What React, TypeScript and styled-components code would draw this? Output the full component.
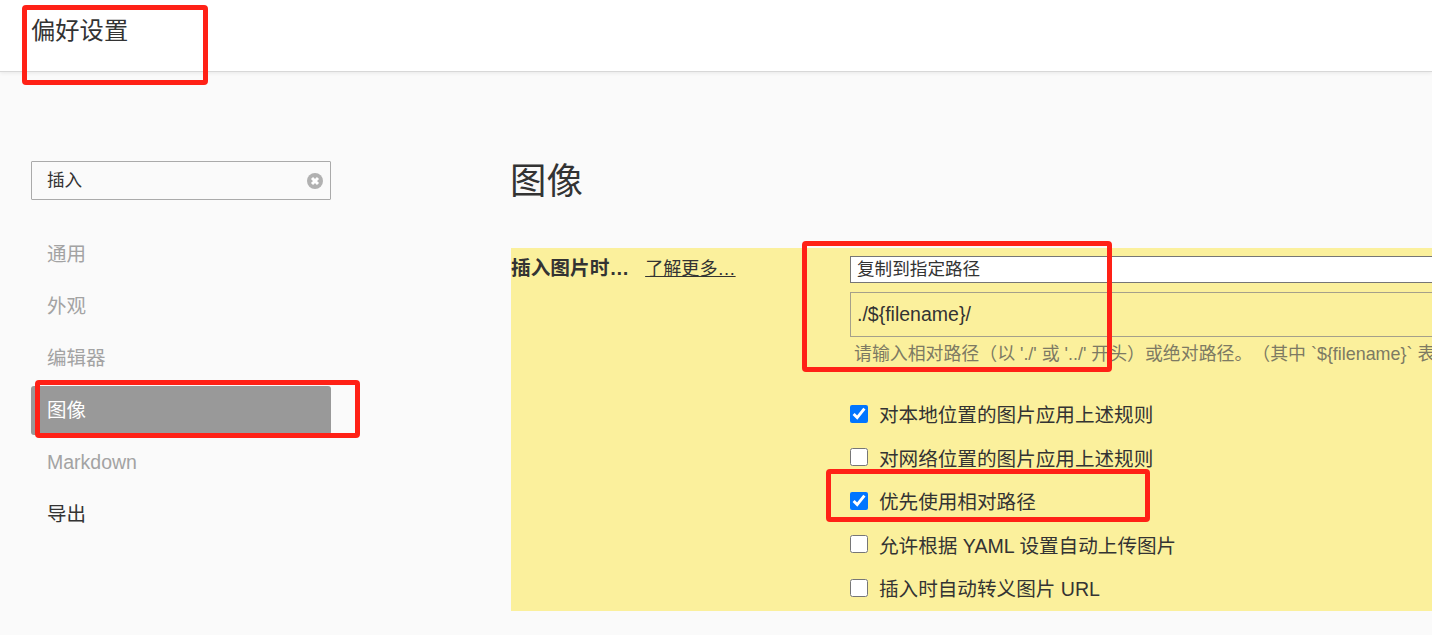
import React from "react";
import styled, { createGlobalStyle } from "styled-components";

const GlobalStyle = createGlobalStyle`
    html, body {
        margin: 0;
        padding: 0;
        height: 100%;
        background-color: #fafafa;
        color: #333;
        font-family: "Liberation Sans", "Noto Sans CJK SC", sans-serif;
    }
`;

const Page = styled.div`
    position: relative;
    width: 100%;
    height: 635px;
    overflow: hidden;
`;

const TitleBar = styled.header`
    height: 72px;
    box-sizing: border-box;
    padding: 15px 0 0 31px;
    background-color: #fff;
    border-bottom: 1px solid #d8d8d8;
    box-shadow: 0 1px 4px rgba(0, 0, 0, 0.08);
    font-size: 24.3px;
    line-height: 32px;
`;

const Content = styled.div`
    display: flex;
`;

const Sidebar = styled.aside`
    flex: 0 0 300px;
    margin: 89px 180px 0 31px;
`;

const SearchBox = styled.div`
    display: flex;
    align-items: center;
    justify-content: space-between;
    box-sizing: border-box;
    height: 39px;
    padding: 0 7px 5px 15px;
    border: 1px solid #aaa;
    border-radius: 1px;
    font-size: 17.6px;

    & svg {
        margin-top: 5px;
    }
`;

const NavList = styled.nav`
    display: flex;
    flex-direction: column;
    margin-top: 28px;
`;

const NavItem = styled.div<{ $tone?: "active" | "strong" }>`
    height: 52px;
    line-height: 52px;
    padding-left: 16px;
    font-size: 19.5px;
    color: ${(p) => (p.$tone === "active" ? "#fff" : p.$tone === "strong" ? "#333" : "#a3a3a3")};

    ${(p) =>
        p.$tone === "active" &&
        `
        height: 49px;
        line-height: 49px;
        margin: 2px 0 1px;
        background-color: #999;
        border-radius: 3px;
    `}
`;

const Main = styled.main`
    flex: 1;
    min-width: 0;
    padding-top: 86px;
`;

const Heading = styled.h1`
    margin: 0 0 42px -1px;
    font-size: 36.4px;
    font-weight: 400;
    line-height: 48px;
`;

const Panel = styled.section`
    display: flex;
    height: 363px;
    overflow: hidden;
    background-color: #fbf09c;
`;

const LabelColumn = styled.div`
    flex: 0 0 339px;
    padding-top: 8px;
    font-size: 18.1px;
    line-height: 24px;
`;

const GroupLabel = styled.strong`
    margin-right: 16px;
    font-size: 19.7px;
`;

const LearnMore = styled.a`
    color: #333;
    text-decoration: underline;
`;

const ControlColumn = styled.div`
    flex: 1;
    min-width: 0;
    padding-top: 8px;
`;

const ModeSelect = styled.select`
    display: block;
    box-sizing: border-box;
    width: calc(100% + 40px);
    height: 27px;
    padding: 0 2px 2px;
    border: 1px solid #767676;
    border-radius: 0;
    background-color: #fff;
    color: #333;
    font-family: inherit;
    font-size: 17.6px;
`;

const PathInput = styled.input`
    display: block;
    box-sizing: border-box;
    width: calc(100% + 40px);
    height: 45px;
    margin-top: 9px;
    padding: 0 6px;
    border: 1px solid #a5a08a;
    outline: none;
    background: transparent;
    color: #333;
    font-family: inherit;
    font-size: 19.5px;
`;

const HelpText = styled.p`
    margin: 5px 0 26px 4px;
    font-size: 17.9px;
    line-height: 24px;
    white-space: nowrap;
    text-spacing-trim: space-all;
    color: #7d7a63;
`;

const OptionList = styled.div`
    display: flex;
    flex-direction: column;
`;

const OptionRow = styled.label`
    display: flex;
    align-items: center;
    gap: 11px;
    height: 43.5px;
    font-size: 19.6px;
`;

const OptionBox = styled.input.attrs({ type: "checkbox" })`
    flex: none;
    width: 18px;
    height: 18px;
    margin: 0;
    accent-color: #0075ff;
`;

const Callout = styled.div<{ $x: number; $y: number; $w: number; $h: number }>`
    position: absolute;
    left: ${(p) => p.$x}px;
    top: ${(p) => p.$y}px;
    width: ${(p) => p.$w}px;
    height: ${(p) => p.$h}px;
    box-sizing: border-box;
    border: 5px solid #ff2116;
    border-radius: 4px;
    pointer-events: none;
`;

const ClearIcon = () => (
    <svg width="16" height="16" viewBox="0 0 16 16">
        <circle cx="8" cy="8" r="8" fill="#b1b1b1" />
        <path d="M5 5l6 6M11 5l-6 6" stroke="#fff" strokeWidth="3" />
    </svg>
);

const options = [
    { text: "对本地位置的图片应用上述规则", checked: true },
    { text: "对网络位置的图片应用上述规则", checked: false },
    { text: "优先使用相对路径", checked: true },
    { text: "允许根据 YAML 设置自动上传图片", checked: false },
    { text: "插入时自动转义图片 URL", checked: false },
];

const App = () => {
    return (
        <Page>
            <GlobalStyle />
            <TitleBar>偏好设置</TitleBar>
            <Content>
                <Sidebar>
                    <SearchBox>
                        插入
                        <ClearIcon />
                    </SearchBox>
                    <NavList>
                        <NavItem>通用</NavItem>
                        <NavItem>外观</NavItem>
                        <NavItem>编辑器</NavItem>
                        <NavItem $tone="active">图像</NavItem>
                        <NavItem>Markdown</NavItem>
                        <NavItem $tone="strong">导出</NavItem>
                    </NavList>
                </Sidebar>
                <Main>
                    <Heading>图像</Heading>
                    <Panel>
                        <LabelColumn>
                            <GroupLabel>插入图片时…</GroupLabel>
                            <LearnMore>了解更多…</LearnMore>
                        </LabelColumn>
                        <ControlColumn>
                            <ModeSelect defaultValue="copy">
                                <option value="copy">复制到指定路径</option>
                            </ModeSelect>
                            <PathInput defaultValue="./${filename}/" />
                            <HelpText>
                                请输入相对路径（以 './' 或 '../' 开头）或绝对路径。（其中 `${"{filename}"}` 表
                            </HelpText>
                            <OptionList>
                                {options.map((o) => (
                                    <OptionRow key={o.text}>
                                        <OptionBox defaultChecked={o.checked} />
                                        {o.text}
                                    </OptionRow>
                                ))}
                            </OptionList>
                        </ControlColumn>
                    </Panel>
                </Main>
            </Content>
            <Callout $x={22} $y={5} $w={186} $h={80} />
            <Callout $x={35} $y={380} $w={325} $h={58} />
            <Callout $x={802} $y={241} $w={310} $h={131} />
            <Callout $x={826} $y={469} $w={324} $h={53} />
        </Page>
    );
};

export default App;
